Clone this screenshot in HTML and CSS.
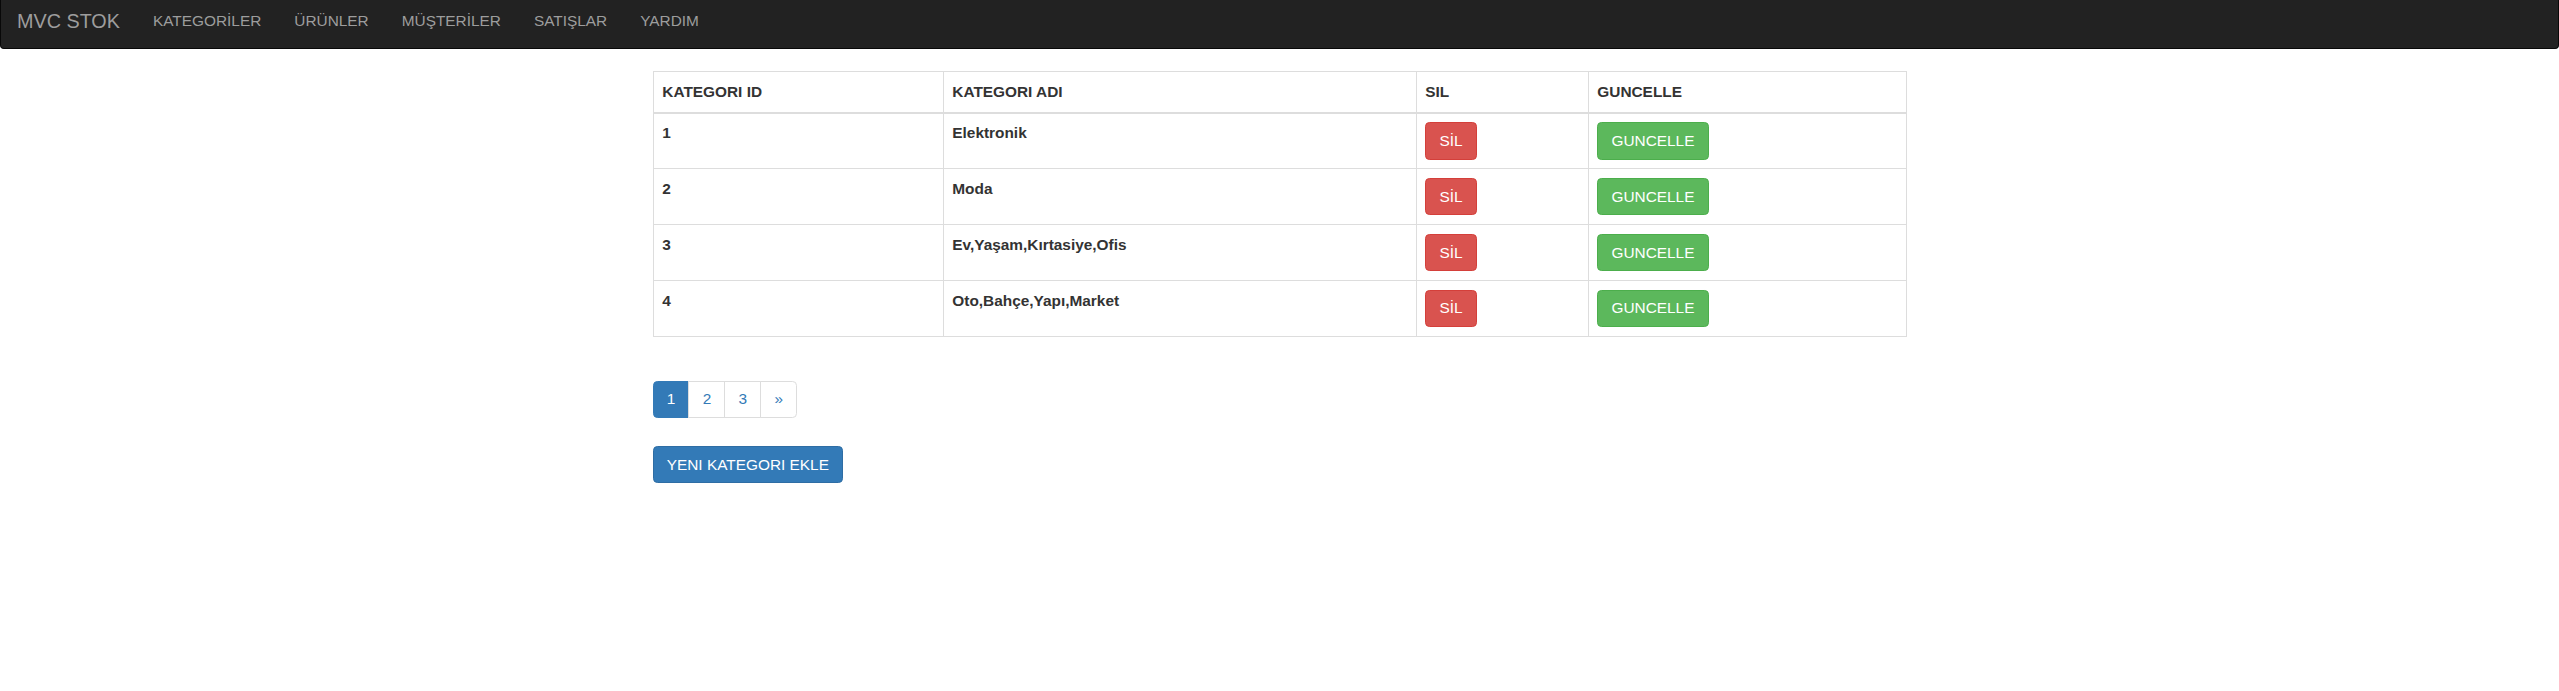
FILE: index.html
```html
<!DOCTYPE html>
<html lang="tr">
<head>
<meta charset="utf-8">
<title>MVC STOK</title>
<link rel="stylesheet" href="styles.css">
</head>
<body>
<nav class="navbar">
  <a class="brand" href="#">MVC STOK</a>
  <ul class="nav">
    <li><a href="#">KATEGORİLER</a></li>
    <li><a href="#">ÜRÜNLER</a></li>
    <li><a href="#">MÜŞTERİLER</a></li>
    <li><a href="#">SATIŞLAR</a></li>
    <li><a href="#">YARDIM</a></li>
  </ul>
</nav>
<main class="container">
  <table class="table">
    <colgroup>
      <col class="c-id">
      <col class="c-name">
      <col class="c-del">
      <col class="c-upd">
    </colgroup>
    <thead>
      <tr><th>KATEGORI ID</th><th>KATEGORI ADI</th><th>SIL</th><th>GUNCELLE</th></tr>
    </thead>
    <tbody>
      <tr><td>1</td><td>Elektronik</td><td><a class="btn btn-danger" href="#">SİL</a></td><td><a class="btn btn-success" href="#">GUNCELLE</a></td></tr>
      <tr><td>2</td><td>Moda</td><td><a class="btn btn-danger" href="#">SİL</a></td><td><a class="btn btn-success" href="#">GUNCELLE</a></td></tr>
      <tr><td>3</td><td>Ev,Yaşam,Kırtasiye,Ofis</td><td><a class="btn btn-danger" href="#">SİL</a></td><td><a class="btn btn-success" href="#">GUNCELLE</a></td></tr>
      <tr><td>4</td><td>Oto,Bahçe,Yapı,Market</td><td><a class="btn btn-danger" href="#">SİL</a></td><td><a class="btn btn-success" href="#">GUNCELLE</a></td></tr>
    </tbody>
  </table>
  <div class="pager-wrap">
    <ul class="pagination">
      <li class="active"><span>1</span></li>
      <li><a href="#">2</a></li>
      <li><a href="#">3</a></li>
      <li><a href="#">»</a></li>
    </ul>
  </div>
  <a class="btn btn-primary" href="#">YENI KATEGORI EKLE</a>
</main>
</body>
</html>
```
FILE: styles.css
```css
* { box-sizing: border-box; }
html, body { margin: 0; padding: 0; }
body {
  font-family: "Liberation Sans", Arial, Helvetica, sans-serif;
  font-size: 15.4px;
  line-height: 22px;
  color: #333;
  background: #fff;
}
a { text-decoration: none; }

.navbar {
  display: flex;
  align-items: flex-start;
  height: 49px;
  background: #222;
  border: 1px solid #080808;
  border-top: 0;
  border-radius: 0 0 4px 4px;
  padding-left: 16px;
  margin-bottom: 22px;
}
.brand {
  font-size: 19.8px;
  line-height: 22px;
  padding: 10px 16.5px 0 0;
  color: #9d9d9d;
}
.nav {
  display: flex;
  list-style: none;
  margin: 0;
  padding: 0;
}
.nav a {
  display: block;
  padding: 10px 16.5px 0;
  line-height: 22px;
  color: #9d9d9d;
}

.container {
  width: 1254px;
  margin: 0 auto;
}

.table {
  width: 100%;
  border-collapse: collapse;
  border-spacing: 0;
  table-layout: fixed;
  margin-bottom: 22px;
  border: 1px solid #ddd;
}
.c-id { width: 290px; }
.c-name { width: 473px; }
.c-del { width: 172px; }
.table th, .table td {
  border: 1px solid #ddd;
  padding: 8.8px;
  text-align: left;
  font-weight: bold;
  line-height: 22px;
}
.table th { vertical-align: bottom; border-bottom: 2px solid #ddd; }
.table td { vertical-align: top; }

.btn {
  display: inline-block;
  padding: 6.6px 13.2px;
  font-size: 15.4px;
  line-height: 22px;
  font-weight: normal;
  color: #fff;
  border: 1px solid transparent;
  border-radius: 4.4px;
  white-space: nowrap;
  vertical-align: middle;
}
.btn-danger { background: #d9534f; border-color: #d43f3a; }
.btn-success { background: #5cb85c; border-color: #4cae4c; }
.btn-primary { background: #337ab7; border-color: #2e6da4; }

.pager-wrap { margin-bottom: 6px; }
.pagination {
  display: inline-flex;
  list-style: none;
  padding: 0;
  margin: 22px 0;
}
.pagination li > a, .pagination li > span {
  display: block;
  padding: 6.6px 13.2px;
  line-height: 22px;
  color: #337ab7;
  background: #fff;
  border: 1px solid #ddd;
  margin-left: -1px;
}
.pagination li:first-child > * { margin-left: 0; border-radius: 4.4px 0 0 4.4px; }
.pagination li:last-child > * { border-radius: 0 4.4px 4.4px 0; }
.pagination li.active > span {
  background: #337ab7;
  border-color: #337ab7;
  color: #fff;
}
```
